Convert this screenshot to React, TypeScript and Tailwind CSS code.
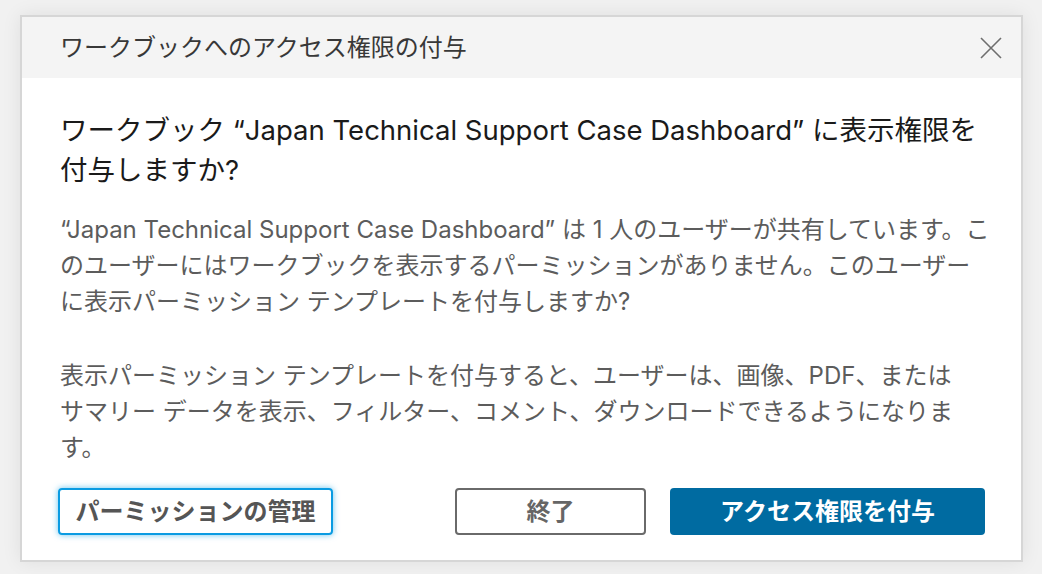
const font = { fontFamily: '"Inter", "Noto Sans CJK JP", sans-serif' };

export default function App() {
  return (
    <div
      className="w-[1042px] h-[574px] bg-[#f1f1f1] pt-[15px] pl-[20px]"
      style={font}
    >
      <div className="w-[1003px] h-[547px] bg-white border-2 border-[#d6d6d6] shadow-[0_0_18px_rgba(0,0,0,0.08)] flex flex-col">
        {/* Header */}
        <div className="h-[61px] bg-[#f4f4f4] flex items-center justify-between pl-[38px] pr-[18px]">
          <h1 className="text-[24px] text-[#383838]">ワークブックへのアクセス権限の付与</h1>
          <button className="w-[24px] h-[24px] flex items-center justify-center">
            <svg width="22" height="22" viewBox="0 0 22 22" fill="none" stroke="#6e6e6e" strokeWidth="1.6">
              <path d="M1 1 L21 21 M21 1 L1 21" />
            </svg>
          </button>
        </div>

        {/* Body */}
        <div className="flex-1 flex flex-col px-[38px] pt-[32px]">
          <h2 className="text-[27.5px] leading-[40px] text-[#1a1a1a] whitespace-nowrap">
            ワークブック “Japan Technical Support Case Dashboard” に表示権限を
            <br />
            付与しますか?
          </h2>
          <div className="mt-[22px] text-[24px] leading-[36px] text-[#5c5c5c] whitespace-nowrap">
            <p>
              “Japan Technical Support Case Dashboard” は 1 人のユーザーが共有しています。こ
              <br />
              のユーザーにはワークブックを表示するパーミッションがありません。このユーザー
              <br />
              に表示パーミッション テンプレートを付与しますか?
            </p>
            <p className="mt-[38px]">
              表示パーミッション テンプレートを付与すると、ユーザーは、画像、PDF、または
              <br />
              サマリー データを表示、フィルター、コメント、ダウンロードできるようになりま
              <br />
              す。
            </p>
          </div>

          <div className="mt-[22px] flex items-center">
            <button className="w-[275px] h-[47px] -ml-[2px] rounded-[4px] border-2 border-[#0a9be2] shadow-[0_0_6px_rgba(10,155,226,0.6)] text-[24px] font-bold text-[#555]">
              パーミッションの管理
            </button>
            <button className="ml-auto w-[191px] h-[47px] rounded-[4px] border-2 border-[#6a6a6a] text-[24px] font-bold text-[#666]">
              終了
            </button>
            <button className="ml-[24px] w-[315px] h-[47px] mr-[-2px] rounded-[4px] bg-[#006ba1] text-[24px] font-bold text-white">
              アクセス権限を付与
            </button>
          </div>
        </div>
      </div>
    </div>
  );
}
